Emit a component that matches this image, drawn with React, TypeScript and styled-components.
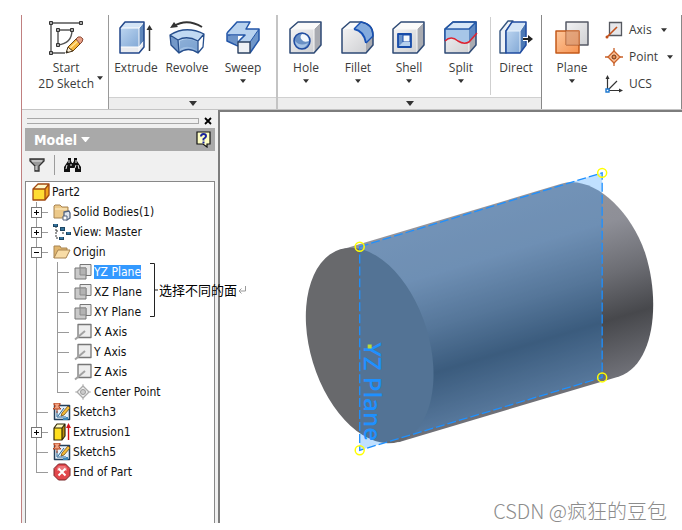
import React from "react";
import styled, { createGlobalStyle, css } from "styled-components";

const GlobalStyle = createGlobalStyle`
  * { box-sizing: border-box; }
  body { margin: 0; background: #fff; }
  button { font: inherit; color: inherit; background: none; border: 0; padding: 0; margin: 0; }
  ul { list-style: none; margin: 0; padding: 0; }
  svg { display: block; flex: none; }
`;

const ribbonFont = `"Open Sans", "Noto Sans", sans-serif`;
const treeFont = `"DejaVu Sans Condensed", "DejaVu Sans", sans-serif`;

/* ---------- page ---------- */

const Page = styled.div`
  position: relative;
  min-height: 100vh;
  padding: 15px 0 7px 21px;
  display: flex;
  flex-direction: column;
`;

const Window = styled.div`
  flex: 1;
  display: flex;
  flex-direction: column;
  border-left: 1px solid #c08080;
`;

const Workspace = styled.div`
  flex: 1;
  display: flex;
`;

/* ---------- ribbon ---------- */

const Ribbon = styled.header`
  display: flex;
  height: 95px;
  border-bottom: 1px solid #c4c4c4;
  font-family: ${ribbonFont};
  font-size: 12px;
  line-height: 16px;
  color: #3b3b3b;
`;

const Panel = styled.section<{ $width: number; $edge: string }>`
  flex: 1 1 ${(p) => p.$width}px;
  display: flex;
  flex-direction: column;
  border-right: ${(p) => p.$edge};
`;

const PanelTools = styled.div`
  flex: 1;
  display: flex;
  padding-left: 1px;
`;

const PanelStrip = styled.button`
  height: 12px;
  display: flex;
  align-items: center;
  justify-content: center;
  background: #ededed;
  border-top: 1px solid #d0d0d0;
`;

const Tool = styled.button<{ $width: number }>`
  flex: 0 0 ${(p) => p.$width}px;
  display: flex;
  flex-direction: column;
  align-items: center;
  padding-top: 4px;
  white-space: nowrap;
`;

const ToolLabel = styled.span`
  margin-top: 5px;
`;

const ToolArrow = styled.span`
  margin-top: 3px;
`;

const StartTool = styled.button`
  flex: 1;
  display: flex;
  justify-content: flex-end;
  padding: 4px 5px 0 0;
  gap: 3px;
`;

const StartBody = styled.span`
  display: flex;
  flex-direction: column;
  align-items: center;
  white-space: nowrap;
`;

const StartArrow = styled.span`
  padding-top: 57px;
`;

const Divider = styled.span`
  width: 1px;
  margin: 2px 0 2px 3px;
  background: #cfcfcf;
`;

const WorkFeatures = styled.div`
  display: flex;
  flex-direction: column;
  gap: 11px;
  padding: 7px 0 0 4px;
`;

const SmallTool = styled.button`
  display: flex;
  align-items: center;
  gap: 6px;
  height: 16px;
  white-space: nowrap;
`;

const SmallArrow = styled.span`
  padding-left: 3px;
`;

/* ---------- model browser ---------- */

const Sidebar = styled.aside`
  position: relative;
  flex: 0 0 196px;
  display: flex;
  flex-direction: column;
  padding: 6px 3px 0 3px;
  background: #f0f0f0;
`;

const GripRow = styled.div`
  display: flex;
  align-items: center;
  gap: 5px;
  height: 9px;
  padding: 0 3px 0 2px;
`;

const Grip = styled.div`
  flex: 1;
  height: 6px;
  border: solid #a8a8a8;
  border-width: 1px 1px 1px 0;
`;

const BrowserTitle = styled.div`
  display: flex;
  align-items: center;
  justify-content: space-between;
  height: 23px;
  margin-top: 3px;
  padding: 0 4px 0 9px;
  background: #a9a9a9;
  color: #fff;
  font-family: ${treeFont};
  font-size: 14px;
  font-weight: 700;
  line-height: 20px;
`;

const TitleButton = styled.button`
  display: flex;
  align-items: center;
  gap: 4px;
`;

const BrowserTools = styled.div`
  display: flex;
  align-items: center;
  height: 30px;
  padding: 0 4px 2px;
  gap: 9px;
`;

const ToolsDivider = styled.span`
  width: 1px;
  height: 20px;
  background: #9c9c9c;
`;

const Tree = styled.ul`
  flex: 1;
  padding-bottom: 40px;
  background: #fff;
  border: 1px solid #888;
  border-bottom: 0;
  font-family: ${treeFont};
  font-size: 12px;
  line-height: 14px;
  color: #111;
`;

const Row = styled.li<{ $root?: boolean }>`
  display: flex;
  align-items: center;
  height: 20px;
  padding-left: ${(p) => (p.$root ? 6 : 0)}px;
  white-space: nowrap;
`;

type GuideKind = "pass" | "tee" | "end";

const Guide = styled.span<{ $kind: GuideKind; $inner?: boolean }>`
  flex: none;
  width: ${(p) => (p.$inner ? 21 : 27)}px;
  height: 20px;
  display: flex;
  align-items: center;
  padding-left: 5px;
  background-repeat: no-repeat;
  background-image: linear-gradient(#9a9a9a, #9a9a9a), linear-gradient(#9a9a9a, #9a9a9a);
  ${(p) => {
    const x = p.$inner ? 4 : 10;
    return css`
      background-position: ${x}px 0, ${x}px 10px;
      background-size: 1px ${p.$kind === "end" ? "11px" : "100%"}, ${p.$kind === "pass" ? "0 0" : "12px 1px"};
    `;
  }}
`;

const Expander = styled.button`
  width: 11px;
  height: 11px;
  background: #fff;
  border: 1px solid #777;
`;

const Item = styled.button<{ $selected?: boolean }>`
  margin-left: 2px;
  ${(p) => p.$selected && css`background: #3399ff; color: #fff;`}
`;

const Note = styled.div`
  position: absolute;
  left: 128px;
  top: 153px;
  z-index: 1;
  display: flex;
  align-items: center;
  gap: 1px;
  font-family: "Noto Sans CJK SC", sans-serif;
  font-size: 13px;
  line-height: 16px;
  color: #000;
  white-space: nowrap;
`;

/* ---------- graphics area ---------- */

const Viewport = styled.main`
  flex: 1;
  min-width: 0;
  border-top: 2px solid #7d7d7d;
  border-left: 2px solid #7d7d7d;
`;

const Scene = styled.svg`
  width: 100%;
  height: auto;
`;

const Watermark = styled.div`
  position: absolute;
  right: 15px;
  bottom: 6px;
  font-family: "Noto Sans CJK SC", sans-serif;
  font-weight: 300;
  font-size: 20px;
  line-height: 26px;
  color: #8c8c8c;
`;

/* ---------- icons ---------- */

const Caret = ({ w = 6, color = "#333" }: { w?: number; color?: string }) => (
  <svg width={w} height={w / 2 + 1} viewBox="0 0 8 5" fill={color}><path d="M0 0h8L4 5z" /></svg>
);

const Big = ({ children }: { children: React.ReactNode }) => (
  <svg width="36" height="36" viewBox="0 0 36 36" fill="none" strokeLinejoin="round">
    <defs>
      <linearGradient id="blue" x1="0" y1="0" x2="1" y2="1">
        <stop offset="0" stopColor="#bcd5f0" /><stop offset="1" stopColor="#83a9d6" />
      </linearGradient>
      <linearGradient id="grey" x1="0" y1="0" x2="1" y2="1">
        <stop offset="0" stopColor="#f2f2f3" /><stop offset="1" stopColor="#cfd0d3" />
      </linearGradient>
      <linearGradient id="orange" x1="0" y1="0" x2="1" y2="1">
        <stop offset="0" stopColor="#fdc79c" /><stop offset="1" stopColor="#f69250" />
      </linearGradient>
    </defs>
    {children}
  </svg>
);

const StartIcon = () => (
  <Big>
    <g stroke="#555" strokeWidth="1.4">
      <path d="M3 4h30M3 4v30M3 34h14M10 11h14M10 11v15M24 11c0 9-5 14-14 15" />
    </g>
    <g fill="#aaa" stroke="#333">
      {[[3, 4], [33, 4], [3, 34], [10, 11], [24, 11], [10, 26]].map(([x, y]) => (
        <rect key={`${x}-${y}`} x={x - 1.5} y={y - 1.5} width="3" height="3" />
      ))}
    </g>
    <path d="M18 34l2-6 5 4z" fill="#fff2d8" stroke="#3d2c12" />
    <path d="M20 28l9-9 5 4-9 9z" fill="#f5b63c" stroke="#6b4310" />
    <path d="M22 29l9-8" stroke="#ffe59b" strokeWidth="1.5" />
    <path d="M28 20l2-2q3-1 5 2l-1 3-2 2z" fill="#e8a087" stroke="#8a4a35" />
    <path d="M18 34l1-2 1.500 1z" fill="#222" />
  </Big>
);

const ExtrudeIcon = () => (
  <Big>
    <path d="M2 9l5-6h19l-5 6z" fill="#d3e4f6" />
    <path d="M2 9h19v19H2z" fill="url(#blue)" />
    <path d="M21 9l5-6v19l-5 6z" fill="#5f87bb" />
    <path d="M2 28h19v6H2zM21 28l5-6v6l-5 6z" fill="#e9ebef" />
    <path d="M2 28h19l5-6M2 9h19l5-6M21 9v25" stroke="#fff" />
    <path d="M2 9l5-6h19v25l-5 6H2z" stroke="#22478a" strokeWidth="1.500" />
    <path d="M31.500 32V9" stroke="#333" strokeWidth="1.500" />
    <path d="M28.500 11l3-5 3 5z" fill="#333" />
  </Big>
);

const RevolveIcon = () => (
  <Big>
    <path d="M5 7Q18-1 33 8" stroke="#333" strokeWidth="2" />
    <path d="M1 9l4-6 4 5z" fill="#333" />
    <path d="M1 16Q17 6 35 15l-6 7q-11-6-20-1z" fill="#c2daf3" />
    <path d="M9 21q9-5 20 1v12q-10-7-19 0z" fill="url(#blue)" />
    <path d="M11 22q8-4 17 1v8q-9-6-17-1z" fill="#7199c9" opacity=".6" />
    <path d="M1 16l8 5 1 13-8-8z" fill="#7398c8" />
    <path d="M29 22l6-7-1 13-5 6z" fill="#fff" />
    <path d="M1 16Q17 6 35 15l-1 13-5 6q-10-7-19 0l-8-8zM1 16l8 5q9-5 20 1l6-7M29 22v12M9 21l1 13" stroke="#274f8d" strokeWidth="1.300" />
  </Big>
);

const SweepIcon = () => (
  <Big>
    <path d="M2 14v8l11 4v-9h-7zM13 23l3-4 8-6 2 3-2 8H13z" fill="#6c93c8" />
    <path d="M2 14L12 3h13l-4 7h13L25 23H13l8-7H3z" fill="#b8d2ef" />
    <path d="M25 23l9-13v11l-9 13z" fill="#6f96c9" />
    <path d="M2 14L12 3h13l-4 7h13v11l-9 13M2 14v8l11 5M3 16h17l-7 7" stroke="#2356a8" strokeWidth="1.500" />
    <path d="M25 23l9-13" stroke="#2356a8" />
    <path d="M13 23h12v11H13z" fill="#eef1f5" stroke="#2b4162" strokeWidth="1.400" />
  </Big>
);

const Cube = ({ top = "#fafafa" }: { top?: string }) => (
  <>
    <path d="M2 10l8-7h23l-7 7z" fill={top} />
    <path d="M2 10h24v24H2z" fill="url(#grey)" />
    <path d="M26 10l7-7v23l-7 8z" fill="#a9abb1" />
    <path d="M2 10h24l7-7M26 10v24" stroke="#f9f9f9" />
    <path d="M2 10l8-7h23v23l-7 8H2z" stroke="#2e4a75" strokeWidth="1.500" />
  </>
);

const HoleIcon = () => (
  <Big>
    <Cube />
    <circle cx="14" cy="22" r="8" fill="#6990c5" stroke="#1f4ba0" strokeWidth="1.500" />
    <path d="M14 15a7 7 0 0 1 7 7q-5 2-7-1-3-3 0-6z" fill="#f3f8fd" />
    <path d="M7 22q5 6 13 2-2 5-7 5-5-1-6-7z" fill="#a6c3e6" />
  </Big>
);

const FilletIcon = () => (
  <Big>
    <path d="M2 10l8-7h11l-7 7z" fill="#fafafa" />
    <path d="M2 10h12q9 2 12 16v8H2z" fill="url(#grey)" />
    <path d="M26 22l7-8v12l-7 8z" fill="#a9abb1" />
    <path d="M14 10l7-7q11 1 12 15l-7 6Q24 12 14 10z" fill="#84abdd" />
    <path d="M14 10q10 2 12 14" stroke="#1650b5" strokeWidth="1.800" />
    <path d="M2 10l8-7h11q12 2 12 13v10l-7 8H2z" stroke="#2e4a75" strokeWidth="1.500" />
    <path d="M14 10l7-7q12 2 12 14l-7 7" stroke="#1650b5" strokeWidth="1.400" />
  </Big>
);

const ShellIcon = () => (
  <Big>
    <Cube />
    <path d="M7 15h13v13H7z" fill="#6a92c9" stroke="#174ba8" strokeWidth="1.800" />
    <path d="M12 16h7v7h-7z" fill="#f4f8fc" stroke="#174ba8" />
    <path d="M8 27l4-4h7v4z" fill="#b5cfed" />
  </Big>
);

const SplitIcon = () => (
  <Big>
    <Cube top="#d7e7f7" />
    <path d="M2 10h24v13q-5 2-9-1-8-6-15 0z" fill="#a7c6e8" />
    <path d="M26 10l7-7v12l-7 8z" fill="#5f8ac2" />
    <path d="M2 22V10l8-7h23v12M2 10h24l7-7" stroke="#2459a9" strokeWidth="1.500" />
    <path d="M2 22q6-6 13 0 6 4 11 1l8-9" stroke="#dc2433" strokeWidth="1.600" />
  </Big>
);

const DirectIcon = () => (
  <Big>
    <path d="M2 12L10 2h5L8 12v22H2z" fill="#eef2f7" stroke="#355580" strokeWidth="1.400" />
    <path d="M8 12l6-9h14l-6 9z" fill="#d3e4f6" />
    <path d="M8 12h14v22H8z" fill="url(#blue)" />
    <path d="M22 12l6-9v23l-6 8z" fill="#4c78b4" />
    <path d="M8 12h14l6-9M22 12v22" stroke="#e7f1fb" />
    <path d="M8 12l6-9h14v23l-6 8H8z" stroke="#1f4ba0" strokeWidth="1.500" />
    <path d="M25 20h7" stroke="#fff" strokeWidth="4" />
    <path d="M25 20h6" stroke="#222" strokeWidth="2" />
    <path d="M30 16l5 4-5 4z" fill="#222" />
  </Big>
);

const PlaneIcon = () => (
  <Big>
    <path d="M12 3h22v23H12z" fill="url(#grey)" stroke="#565a66" strokeWidth="1.500" />
    <path d="M2 12h23v22H2z" fill="url(#orange)" stroke="#c3591a" strokeWidth="1.500" />
    <path d="M12 12v14h13" stroke="#a3542a" />
    <path d="M12 12h13v14H12z" fill="#d49a78" opacity=".6" />
  </Big>
);

const AxisIcon = () => (
  <svg width="18" height="18" viewBox="0 0 18 18" fill="none">
    <path d="M4.500 1.500h12v13h-12z" fill="#e6e7ea" stroke="#55585f" strokeWidth="1.300" />
    <path d="M2 16L12 6" stroke="#c3501a" strokeWidth="1.600" /><circle cx="2" cy="16" r="1.500" fill="#c3501a" />
  </svg>
);
const PointIcon = () => (
  <svg width="18" height="18" viewBox="0 0 18 18" fill="none" stroke="#c9622a">
    <path d="M9 0v18M0 9h18" strokeWidth="1.300" />
    <path d="M9 3l6 6-6 6-6-6z" fill="#fbc096" strokeWidth="1.300" />
    <circle cx="9" cy="9" r="2" fill="#e88b4d" stroke="#6b3417" />
  </svg>
);
const UcsIcon = () => (
  <svg width="18" height="18" viewBox="0 0 18 18" fill="none" stroke="#333">
    <path d="M2.500 14V3M4 15.500h11M3 15L12 6" strokeWidth="1.200" />
    <path d="M.5 4l2-4 2 4zM14 13.500l4 2-4 2z" fill="#333" stroke="none" />
    <path d="M1 14h3v3H1z" fill="#fff" stroke="#1d78d0" strokeWidth="1.400" />
  </svg>
);

const Small = ({ children }: { children: React.ReactNode }) => (
  <svg width="18" height="18" viewBox="0 0 18 18" fill="none" strokeLinejoin="round">{children}</svg>
);

const PartIcon = () => (
  <Small>
    <path d="M1 6l5-5h11l-4 5z" fill="#fff8c8" /><path d="M1 6h12v11H1z" fill="#ffdc33" />
    <path d="M13 6l4-5v11l-4 5z" fill="#f0a21c" />
    <path d="M1 6l5-5h11v11l-4 5H1zM1 6h12l4-5M13 6v11" stroke="#a24a10" strokeWidth="1.300" />
  </Small>
);
const BodiesIcon = () => (
  <Small>
    <path d="M1 15V3l1-1h5l2 2h6v11z" fill="#ecc98a" stroke="#a78350" />
    <path d="M2 6h12" stroke="#fff0cd" />
    <path d="M11 9l5-1 1 2v5l-3 2-3-1z" fill="#dfe5ee" stroke="#53637e" strokeWidth="1.300" />
    <path d="M10 13h4v4h-4z" fill="#fff" stroke="#53637e" />
  </Small>
);
const ViewIcon = () => (
  <Small>
    <path d="M3 3v12h4M3 8h3M9 6h2M9 10h3" stroke="#333" strokeDasharray="2 1" />
    <path d="M0 1h5v3H0zM7 4h5v4H7zM13 9h5v3h-5zM6 14h5v3H6z" fill="#1b4664" />
    <path d="M1 2h3M8 6h3M14 10h3M7 15h3" stroke="#4c9bd0" />
  </Small>
);
const FolderIcon = () => (
  <Small>
    <path d="M1 15V3h6l1 2h6v3" fill="#e1b66e" stroke="#a78350" />
    <path d="M1 15L5 7h12l-4 8z" fill="#f8dca6" stroke="#a78350" />
  </Small>
);
const TreePlaneIcon = () => (
  <Small>
    <path d="M6 1.500h11v11H6z" fill="#e7e7e7" stroke="#777" /><path d="M1 5h11v11H1z" fill="#c9c9c9" stroke="#777" />
    <path d="M6 5h6v7H6z" fill="#b3b3b3" stroke="#8b8b8b" />
  </Small>
);
const TreeAxisIcon = () => (
  <Small>
    <path d="M4 1.500h13v13H4z" fill="#ededed" stroke="#777" strokeWidth="1.300" />
    <path d="M1 16.500L11 8" stroke="#a2a2a2" strokeWidth="2" />
  </Small>
);
const CenterIcon = () => (
  <Small>
    <path d="M9 1v16M1 9h16" stroke="#bbb" /><path d="M9 3l6 6-6 6-6-6z" fill="#eee" stroke="#aaa" strokeWidth="1.300" />
    <circle cx="9" cy="9" r="2.500" fill="#ccc" stroke="#999" />
  </Small>
);
const SketchIcon = () => (
  <Small>
    <path d="M1.500 2.500h15v14h-15z" fill="#e8f2fa" stroke="#24405c" strokeWidth="1.500" />
    <path d="M4 8v6h9M5 13l6-8" stroke="#2b6695" />
    <path d="M8 13l1-3 6-7 2 2-6 7z" fill="#f6bd38" stroke="#6e4a14" strokeWidth=".8" />
    <path d="M10 16h4v-2" stroke="#3f88ba" strokeWidth="2" />
    <path d="M1 0h6v2H6v2l2 2H0l2-2V2H1z" fill="#f0a080" stroke="#b5431c" />
    <path d="M4 6v4" stroke="#b5431c" />
  </Small>
);
const ExtrusionIcon = () => (
  <Small>
    <path d="M1 5l3-4h8L9 5z" fill="#fff9c0" /><path d="M1 5h8v12H1z" fill="#ffdf20" /><path d="M9 5l3-4v12l-3 4z" fill="#b88a10" />
    <path d="M1 5l3-4h8v12l-3 4H1zM1 5h8l3-4M9 5v12" stroke="#33290a" strokeWidth="1.200" />
    <path d="M15.500 17V4" stroke="#d4131c" strokeWidth="1.400" /><path d="M13 5l2.500-5L18 5z" fill="#d4131c" />
  </Small>
);
const EndIcon = () => (
  <Small>
    <path d="M5.500 1h7L17 5.500v7L12.500 17h-7L1 12.500v-7z" fill="#e2474c" stroke="#782629" />
    <path d="M4 5l2-2h6l2 2v3H4z" fill="#f29a9c" opacity=".6" />
    <path d="M5.500 5.500l7 7M12.500 5.500l-7 7" stroke="#fff" strokeWidth="2" />
  </Small>
);

const CloseIcon = () => (
  <svg width="8" height="8" viewBox="0 0 8 8" stroke="#000" strokeWidth="1.800"><path d="M1 1l6 6M7 1L1 7" /></svg>
);
const HelpIcon = () => (
  <svg width="15" height="17" viewBox="0 0 15 17">
    <path d="M1 1h13v12h-3v3l-4-3H1z" fill="#ffffc4" stroke="#111" strokeWidth="1.200" />
    <path d="M5 5.500q0-2.500 2.500-2.500T10 5.200Q10 6.500 7.500 8v1.500" fill="none" stroke="#1b249c" strokeWidth="2" />
    <path d="M6.500 10.500h2v2h-2z" fill="#1b249c" />
  </svg>
);
const FilterIcon = () => (
  <svg width="16" height="15" viewBox="0 0 16 15">
    <path d="M1 1h14v2l-5 5v5H6V8L1 3z" fill="#999" stroke="#333" strokeWidth="1.300" />
    <path d="M3 3h10M7 8v4" stroke="#e6e6e6" />
  </svg>
);
const FindIcon = () => (
  <svg width="17" height="15" viewBox="0 0 17 15">
    <path d="M4 0h3v3l1 2h1l1-2V0h3v3l4 6v5h-6v-4H6v4H0V9l4-6z" fill="#111" />
    <path d="M5 2v3M3 7L2 11M12 2v3M12 7l-1 3M14 7l1 4M7 6v2" stroke="#fff" strokeWidth=".9" />
  </svg>
);
const Bracket = () => (
  <svg width="8" height="54" viewBox="0 0 8 54" fill="none" stroke="#222"><path d="M0 .5h4.500v53H0M4.500 27H8" /></svg>
);
const ReturnMark = () => (
  <svg width="8" height="8" viewBox="0 0 8 8" fill="none" stroke="#999"><path d="M7.500 0v5H1M3.500 2.500L1 5l2.500 2.500" /></svg>
);
const Plus = ({ open }: { open?: boolean }) => (
  <svg width="9" height="9" viewBox="0 0 9 9" stroke="#000"><path d={open ? "M2 4.500h5" : "M2 4.500h5M4.500 2v5"} /></svg>
);

/* ---------- data ---------- */

type ToolSpec = { name: string; icon: React.ReactNode; width: number; menu?: boolean };

const createTools: ToolSpec[] = [
  { name: "Extrude", icon: <ExtrudeIcon />, width: 52 },
  { name: "Revolve", icon: <RevolveIcon />, width: 50 },
  { name: "Sweep", icon: <SweepIcon />, width: 62, menu: true },
];
const modifyTools: ToolSpec[] = [
  { name: "Hole", icon: <HoleIcon />, width: 54, menu: true },
  { name: "Fillet", icon: <FilletIcon />, width: 50, menu: true },
  { name: "Shell", icon: <ShellIcon />, width: 52, menu: true },
  { name: "Split", icon: <SplitIcon />, width: 52, menu: true },
];

type Node = {
  name: string;
  icon: React.ReactNode;
  level: 0 | 1 | 2;
  toggle?: "open" | "closed";
  last?: boolean;
  selected?: boolean;
};

const nodes: Node[] = [
  { name: "Part2", icon: <PartIcon />, level: 0 },
  { name: "Solid Bodies(1)", icon: <BodiesIcon />, level: 1, toggle: "closed" },
  { name: "View: Master", icon: <ViewIcon />, level: 1, toggle: "closed" },
  { name: "Origin", icon: <FolderIcon />, level: 1, toggle: "open" },
  { name: "YZ Plane", icon: <TreePlaneIcon />, level: 2, selected: true },
  { name: "XZ Plane", icon: <TreePlaneIcon />, level: 2 },
  { name: "XY Plane", icon: <TreePlaneIcon />, level: 2 },
  { name: "X Axis", icon: <TreeAxisIcon />, level: 2 },
  { name: "Y Axis", icon: <TreeAxisIcon />, level: 2 },
  { name: "Z Axis", icon: <TreeAxisIcon />, level: 2 },
  { name: "Center Point", icon: <CenterIcon />, level: 2, last: true },
  { name: "Sketch3", icon: <SketchIcon />, level: 1 },
  { name: "Extrusion1", icon: <ExtrusionIcon />, level: 1, toggle: "closed" },
  { name: "Sketch5", icon: <SketchIcon />, level: 1 },
  { name: "End of Part", icon: <EndIcon />, level: 1, last: true },
];

/* ---------- parts ---------- */

const ToolButton = ({ name, icon, width, menu }: ToolSpec) => (
  <Tool type="button" $width={width}>
    {icon}
    <ToolLabel>{name}</ToolLabel>
    {menu && <ToolArrow><Caret /></ToolArrow>}
  </Tool>
);

const TreeRow = ({ node }: { node: Node }) => (
  <Row $root={node.level === 0} role="treeitem" aria-level={node.level + 1} aria-selected={!!node.selected}>
    {node.level > 0 && (
      <Guide $kind={node.level === 2 ? "pass" : node.last ? "end" : "tee"}>
        {node.toggle && (
          <Expander type="button" aria-label={`Toggle ${node.name}`}><Plus open={node.toggle === "open"} /></Expander>
        )}
      </Guide>
    )}
    {node.level === 2 && <Guide $inner $kind={node.last ? "end" : "tee"} />}
    {node.icon}
    <Item type="button" $selected={node.selected}>{node.name}</Item>
  </Row>
);

const corners = [[359, 247], [602, 173], [602, 378], [359, 451]];

const Cylinder = () => (
  <Scene viewBox="219 112 463 380" role="img" aria-label="Cylinder with YZ work plane">
    <defs>
      <linearGradient id="side" gradientUnits="userSpaceOnUse" x1="450" y1="217" x2="508" y2="410">
        <stop offset="0" stopColor="#94949b" />
        <stop offset=".25" stopColor="#8e8f97" />
        <stop offset=".5" stopColor="#6c6d73" />
        <stop offset=".72" stopColor="#47484c" />
        <stop offset="1" stopColor="#707178" />
      </linearGradient>
    </defs>
    <path
      fill="url(#side)"
      d="M340 250L561 184C592 175 629 208 645 253C661 303 654 365 619 377L398 443z"
    />
    <ellipse cx="369" cy="346" rx="59.400" ry="100.800" transform="rotate(-17 369 346)" fill="#68696c" />
    <polygon points={corners.join(" ")} fill="#1e90ff" fillOpacity=".28" />
    <polygon points={corners.join(" ")} fill="none" stroke="#1e90ff" strokeWidth="1.300" strokeDasharray="9 3" />
    <text
      transform="translate(363 343) rotate(90)"
      fill="#1e90ff"
      fontFamily="Open Sans, Noto Sans, sans-serif"
      fontWeight="600"
      fontSize="24"
    >
      YZ Plane
    </text>
    <path d="M367 345h4v4h-4z" fill="#b8dc3c" />
    {corners.map(([x, y]) => (
      <circle key={`${x}-${y}`} cx={x} cy={y} r="4.500" fill="none" stroke="#ff0" strokeWidth="1.500" />
    ))}
  </Scene>
);

export default function App() {
  return (
    <Page>
      <GlobalStyle />
      <Window>
        <Ribbon>
          <Panel $width={87} $edge="1px solid #999">
            <StartTool type="button">
              <StartBody>
                <StartIcon />
                <ToolLabel>Start</ToolLabel>
                <span>2D Sketch</span>
              </StartBody>
              <StartArrow><Caret /></StartArrow>
            </StartTool>
          </Panel>
          <Panel $width={169} $edge="2px solid #c4c4c4">
            <PanelTools>
              {createTools.map((t) => <ToolButton key={t.name} {...t} />)}
            </PanelTools>
            <PanelStrip type="button" aria-label="More create tools"><Caret w={8} /></PanelStrip>
          </Panel>
          <Panel $width={264} $edge="1px solid #888">
            <PanelTools>
              {modifyTools.map((t) => <ToolButton key={t.name} {...t} />)}
              <Divider />
              <ToolButton name="Direct" icon={<DirectIcon />} width={50} />
            </PanelTools>
            <PanelStrip type="button" aria-label="More modify tools"><Caret w={8} /></PanelStrip>
          </Panel>
          <Panel $width={140} $edge="1px solid #888">
            <PanelTools>
              <ToolButton name="Plane" icon={<PlaneIcon />} width={58} menu />
              <WorkFeatures>
                <SmallTool type="button"><AxisIcon />Axis<SmallArrow><Caret /></SmallArrow></SmallTool>
                <SmallTool type="button"><PointIcon />Point<SmallArrow><Caret /></SmallArrow></SmallTool>
                <SmallTool type="button"><UcsIcon />UCS</SmallTool>
              </WorkFeatures>
            </PanelTools>
          </Panel>
        </Ribbon>
        <Workspace>
          <Sidebar>
            <GripRow>
              <Grip />
              <button type="button" aria-label="Close"><CloseIcon /></button>
            </GripRow>
            <BrowserTitle>
              <TitleButton type="button">Model<Caret w={9} color="#fff" /></TitleButton>
              <button type="button" aria-label="Help"><HelpIcon /></button>
            </BrowserTitle>
            <BrowserTools>
              <button type="button" aria-label="Filter"><FilterIcon /></button>
              <ToolsDivider />
              <button type="button" aria-label="Find"><FindIcon /></button>
            </BrowserTools>
            <Tree role="tree" aria-label="Model">
              {nodes.map((n) => <TreeRow key={n.name} node={n} />)}
            </Tree>
            <Note>
              <Bracket />
              选择不同的面
              <ReturnMark />
            </Note>
          </Sidebar>
          <Viewport>
            <Cylinder />
          </Viewport>
        </Workspace>
      </Window>
      <Watermark>CSDN @疯狂的豆包</Watermark>
    </Page>
  );
}
